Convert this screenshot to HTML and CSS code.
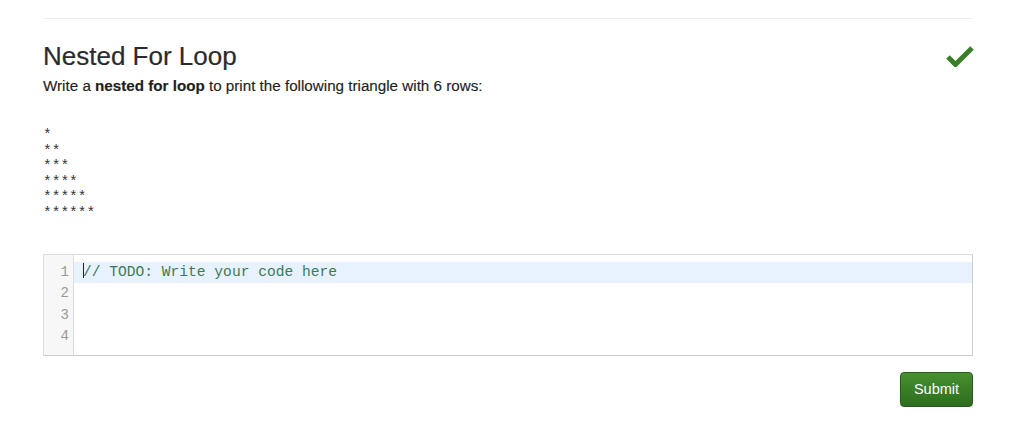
FILE: index.html
```html
<!DOCTYPE html>
<html>
<head>
<meta charset="utf-8">
<link rel="stylesheet" href="styles.css">
</head>
<body>
<div class="page">
  <hr class="rule">
  <div class="header">
    <h2 class="title">Nested For Loop</h2>
    <svg class="check" width="28" height="22" viewBox="0 0 28 22"><path d="M2 12 L9.5 19.5 L26 3" fill="none" stroke="#3a7f28" stroke-width="5" stroke-linejoin="miter"/></svg>
  </div>
  <p class="prompt">Write a <strong>nested for loop</strong> to print the following triangle with 6 rows:</p>
  <pre class="triangle">
*
**
***
****
*****
******</pre>
  <div class="editor">
    <div class="gutter">
      <div class="ln">1</div>
      <div class="ln">2</div>
      <div class="ln">3</div>
      <div class="ln">4</div>
    </div>
    <div class="code">
      <div class="line active"><span class="cursor"></span><span class="comment">// TODO: Write your code here</span></div>
      <div class="line"></div>
      <div class="line"></div>
      <div class="line"></div>
    </div>
  </div>
  <div class="actions">
    <button class="submit">Submit</button>
  </div>
</div>
</body>
</html>
```
FILE: styles.css
```css
html, body {
  margin: 0;
  padding: 0;
  background: #fff;
}
body {
  font-family: "Liberation Sans", Arial, Helvetica, sans-serif;
  color: #333;
}
.page {
  width: 930px;
  margin-left: 43px;
  padding-top: 18px;
}
.rule {
  border: 0;
  border-top: 1px solid #eee;
  margin: 0;
  height: 0;
}
.header {
  display: flex;
  justify-content: space-between;
  align-items: flex-start;
  margin-top: 21px;
}
.title {
  margin: 0;
  font-size: 26px;
  font-weight: 400;
  line-height: 32px;
  color: #2b2b2b;
  -webkit-text-stroke: 0.2px #2b2b2b;
}
.check {
  margin-top: 5px;
  margin-right: -1px;
}
.prompt {
  margin: 4px 0 0;
  font-size: 15.2px;
  line-height: 20px;
  color: #1e1e1e;
  -webkit-text-stroke: 0.15px #1e1e1e;
}
.prompt strong {
  font-weight: 700;
}
.triangle {
  margin: 32px 0 0;
  font-family: "Liberation Mono", "Courier New", monospace;
  font-size: 14.5px;
  line-height: 15.6px;
  color: #333;
}
.editor {
  margin-top: 32px;
  display: flex;
  border: 1px solid #ddd;
  border-bottom-color: #ccc;
  border-right-color: #ccc;
  height: 100px;
  background: #fff;
}
.gutter {
  width: 30px;
  background: #f7f7f7;
  border-right: 1px solid #ddd;
  padding-top: 7px;
  box-sizing: border-box;
}
.ln {
  height: 21.5px;
  line-height: 21.5px;
  text-align: right;
  padding-right: 4px;
  font-family: "Liberation Mono", "Courier New", monospace;
  font-size: 14px;
  color: #999;
}
.code {
  flex: 1;
  padding-top: 7px;
}
.line {
  height: 21.5px;
  line-height: 21.5px;
  padding-left: 9px;
  font-family: "Liberation Mono", "Courier New", monospace;
  font-size: 14.6px;
  white-space: pre;
}
.line.active {
  background: #e8f2fe;
}
.cursor {
  display: inline-block;
  width: 0;
  height: 15px;
  border-left: 1px solid #222;
  vertical-align: -2px;
  margin-right: -1px;
}
.comment {
  color: #3b7a57;
}
.actions {
  display: flex;
  justify-content: flex-end;
  margin-top: 16px;
}
.submit {
  font-family: "Liberation Sans", Arial, sans-serif;
  font-size: 14.5px;
  color: #fff;
  background: linear-gradient(#46912f, #2e6c1d);
  border: 1px solid #2a5b1c;
  border-radius: 4px;
  width: 73px;
  height: 35px;
  padding: 0;
  box-shadow: 0 1px 2px rgba(0,0,0,0.15);
}
```
